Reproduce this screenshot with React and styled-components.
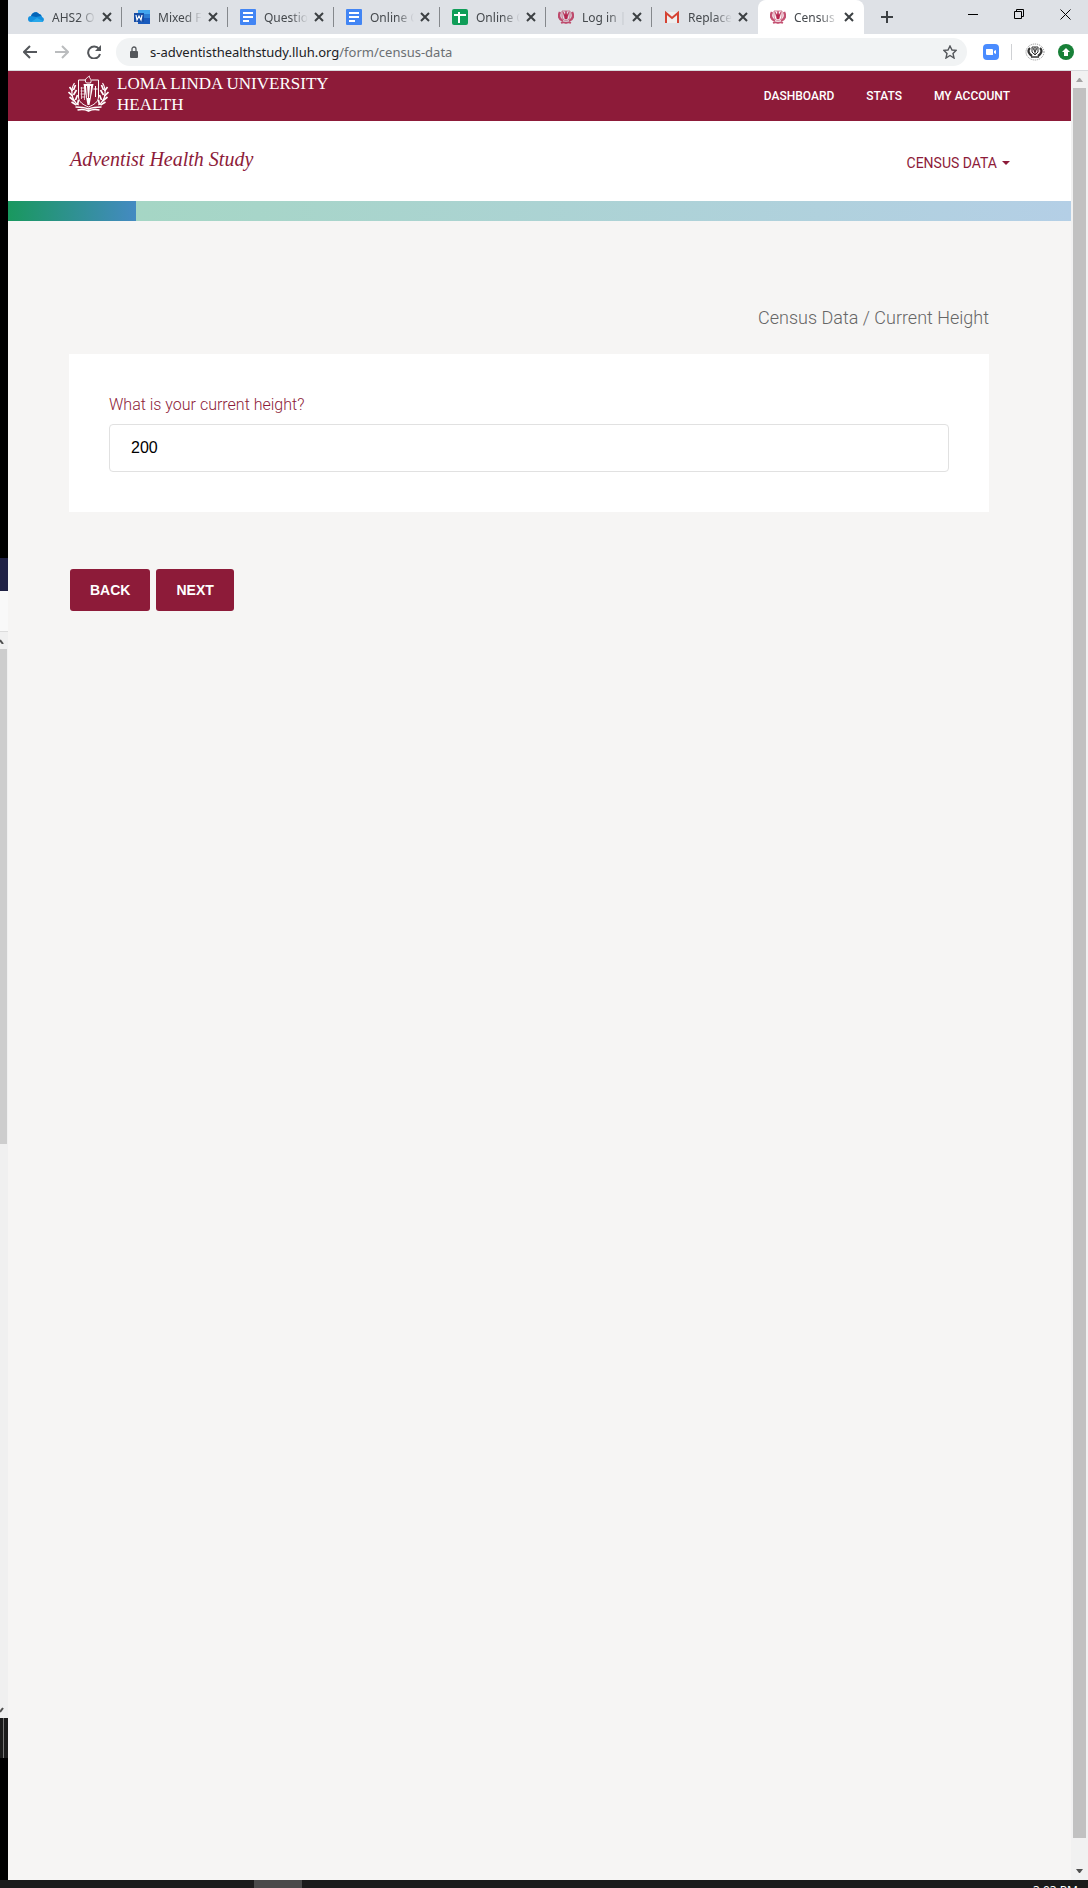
import React, { useState } from 'react';
import styled, { createGlobalStyle } from 'styled-components';

const GlobalStyle = createGlobalStyle`
  * {
    box-sizing: border-box;
  }

  body {
    margin: 0;
    background: #f6f5f4;
    font-family: Roboto, 'Liberation Sans', sans-serif;
  }

  button, input {
    font: inherit;
    margin: 0;
  }

  svg {
    display: block;
    flex: none;
  }
`;

const Desktop = styled.div`
  display: flex;
  flex-direction: column;
  min-height: 100vh;
`;

const Workspace = styled.div`
  display: flex;
  flex: 1;
`;

/* sliver of the windows behind the browser */
const Behind = styled.div`
  width: 8px;
  flex: none;
  display: flex;
  flex-direction: column;
  background: #000;
`;

const BehindTitle = styled.div`
  height: 33px;
  margin-top: 558px;
  background: #1f2144;
`;

const BehindPanel = styled.div`
  height: 41px;
  background: #f9f9f9;
  border-bottom: 1px solid #dcdcdc;
`;

const BehindScroll = styled.div`
  flex: 1;
  display: flex;
  flex-direction: column;
  justify-content: space-between;
  padding: 6px 0 5px;
  background: #f0f0f0;
`;

const BehindThumb = styled.div`
  width: 7px;
  height: 495px;
  margin: 5px 0 auto;
  background: #cdcdcd;
`;

const BehindTaskbar = styled.div`
  height: 40px;
  margin-bottom: 122px;
  background: linear-gradient(to right, #1b1b1b 3px, #777 3px, #777 4px, #1b1b1b 4px);
`;

const Browser = styled.div`
  flex: 1;
  min-width: 0;
  display: flex;
  flex-direction: column;
`;

const TabBar = styled.div`
  display: flex;
  align-items: flex-end;
  height: 34px;
  padding-left: 8px;
  background: #dee1e6;
  font-family: 'Noto Sans', sans-serif;
  font-size: 12px;
`;

const Tab = styled.div`
  position: relative;
  display: flex;
  align-items: center;
  width: 106px;
  height: 34px;
  padding: 0 7px 0 12px;
  color: #45494d;
  background: ${({ $active }) => ($active ? '#fff' : 'transparent')};
  border-radius: 8px 8px 0 0;

  &::after {
    content: '';
    position: absolute;
    right: 0;
    top: 7px;
    width: 1px;
    height: 20px;
    background: ${({ $divider }) => ($divider ? '#85888c' : 'transparent')};
  }
`;

const TabTitle = styled.span`
  flex: 1;
  min-width: 0;
  margin: 0 3px 0 8px;
  white-space: nowrap;
  mask-image: linear-gradient(to right, #000 60%, transparent);
`;

const IconButton = styled.button`
  display: flex;
  align-items: center;
  justify-content: center;
  flex: none;
  width: ${({ $size }) => $size || 16}px;
  height: ${({ $size }) => $size || 16}px;
  padding: 0;
  border: none;
  background: none;
  color: ${({ $color }) => $color || '#3c4043'};
  cursor: pointer;
`;

const NewTab = styled.div`
  display: flex;
  align-items: center;
  height: 34px;
  padding-left: 15px;
`;

const WindowControls = styled.div`
  display: flex;
  align-self: flex-start;
  gap: 30px;
  margin-left: auto;
  padding: 6px 15px 0 0;
`;

const Toolbar = styled.div`
  display: flex;
  align-items: center;
  height: 37px;
  padding: 0 14px 0 12px;
  background: #fff;
  border-bottom: 1px solid #d8dadd;
`;

const NavButtons = styled.div`
  display: flex;
  gap: 12px;
  margin-right: 12px;
`;

const AddressBar = styled.div`
  flex: 1;
  display: flex;
  align-items: center;
  height: 28px;
  padding: 0 9px 0 12px;
  border-radius: 14px;
  background: #f1f3f4;
`;

const Address = styled.div`
  flex: 1;
  margin-left: 10px;
  color: #6b6f73;
  font-family: 'Noto Sans', sans-serif;
  font-size: 13px;
`;

const Host = styled.span`
  color: #202124;
`;

const Extensions = styled.div`
  display: flex;
  align-items: center;
  gap: 12px;
  margin-left: 16px;
`;

const Separator = styled.div`
  width: 1px;
  height: 16px;
  background: #cfd1d4;
`;

const Viewport = styled.div`
  flex: 1;
  display: flex;
`;

const Page = styled.div`
  flex: 1;
  min-width: 0;
  background: #f6f5f4;
`;

const TopBar = styled.header`
  display: flex;
  align-items: center;
  justify-content: space-between;
  height: 50px;
  padding: 0 61px 0 60px;
  background: #8d1b39;
`;

const Brand = styled.a`
  display: flex;
  align-items: center;
  gap: 8px;
  padding-bottom: 4px;
  color: #fff;
  text-decoration: none;
`;

const BrandName = styled.span`
  font-family: 'Liberation Serif', serif;
  font-size: 17px;
  line-height: 21px;
`;

const TopNav = styled.nav`
  display: flex;
  gap: 32px;
`;

const TopLink = styled.a`
  color: #fff;
  font-size: 12px;
  font-weight: 500;
  text-decoration: none;
`;

const SubHeader = styled.div`
  display: flex;
  align-items: center;
  justify-content: space-between;
  height: 80px;
  padding: 0 61px 0 62px;
  background: #fff;
`;

const StudyName = styled.h1`
  margin: 0;
  padding-bottom: 3px;
  color: #8d1b39;
  font-family: 'Liberation Serif', serif;
  font-size: 20px;
  font-style: italic;
  font-weight: normal;
`;

const MenuButton = styled.button`
  display: flex;
  align-items: center;
  gap: 5px;
  padding: 4px 0 0;
  border: none;
  background: none;
  color: #8d1b39;
  font-size: 14px;
  cursor: pointer;
`;

const Progress = styled.div`
  height: 20px;
  background: linear-gradient(to right, #a3d7c0, #b4cfe6);
`;

const ProgressFill = styled.div`
  height: 100%;
  background: linear-gradient(to right, #19985e, #448ac2);
`;

const Content = styled.main`
  padding: 84px 82px 0 61px;
`;

const Breadcrumb = styled.div`
  margin-bottom: 23px;
  color: #666;
  font-size: 18px;
  font-weight: 300;
  line-height: 26px;
  text-align: right;
`;

const Card = styled.div`
  padding: 40px;
  background: #fff;
`;

const Label = styled.label`
  display: block;
  margin-bottom: 8px;
  color: #8d1b39;
  font-size: 16px;
  font-weight: 300;
  line-height: 22px;
`;

const TextInput = styled.input`
  display: block;
  width: 100%;
  height: 48px;
  padding: 0 21px;
  border: 1px solid #e1e1e1;
  border-radius: 4px;
  background: #fff;
  color: #000;
  font-family: 'Liberation Sans', sans-serif;
  font-size: 16px;
`;

const Actions = styled.div`
  display: flex;
  gap: 6px;
  margin: 57px 0 0 1px;
`;

const Button = styled.button`
  height: 42px;
  padding: 0 20px;
  border: none;
  border-radius: 3px;
  background: #8d1b39;
  color: #fff;
  font-family: 'Liberation Sans', sans-serif;
  font-size: 14px;
  font-weight: bold;
  cursor: pointer;
`;

const Scrollbar = styled.div`
  display: flex;
  flex-direction: column;
  align-items: center;
  width: 17px;
  padding: 7px 0;
  background: #f1f1f1;
`;

const ScrollThumb = styled.div`
  flex: 1;
  width: 13px;
  margin: 6px 0 31px;
  background: #c1c1c1;
`;

const Taskbar = styled.div`
  display: flex;
  justify-content: space-between;
  height: 8px;
  padding: 0 10px 0 254px;
  overflow: hidden;
  background: #1b1b1b;
`;

const TaskItem = styled.div`
  width: 48px;
  background: #4a4a4a;
`;

const Clock = styled.span`
  padding-top: 3px;
  color: #fff;
  font-family: 'Noto Sans', sans-serif;
  font-size: 12px;
  line-height: 16px;
`;

const Crest = ({ width, height, color }) => (
  <svg width={width} height={height} viewBox="0 0 40 38" fill="none" stroke={color}>
    <path d="M17 5H10v17c0 5 5 8 10 10 5-2 10-5 10-10V5h-7" />
    <path d="M15 9h10l-4 21h-2z" fill={color} stroke="none" />
    <path d="M18 11l1 12M22 11l-1 12" stroke="#8d1b39" />
    <path d="M18 8c-3-3 0-5 3-7-1 2 3 3 1 7z" />
    <path d="M27 11v11M25 14h4" />
    <path d="M12 13h4M12 16h4M12 19h5M13 22h4M13 12v12M16 12v13" opacity="0.7" />
    <path
      d="M6 8c-4 6-4 17 4 22M34 8c4 6 4 17-4 22"
      strokeWidth="1.2"
    />
    <path
      d="M1 12l3 4M0 17l4 4M1 22l5 4M3 27l5 3M7 10l-2 5M8 15l-3 5M9 20l-2 5M10 25l-1 5M39 12l-3 4M40 17l-4 4M39 22l-5 4M37 27l-5 3M33 10l2 5M32 15l3 5M31 20l2 5M30 25l1 5"
      strokeWidth="1.7"
    />
    <path d="M7 32c5 0 8 0 13 2 5-2 8-2 13-2M9 35c4-1 7-1 11 1 4-2 7-2 11-1" strokeWidth="1.6" />
  </svg>
);

/* small version of the crest, readable at favicon size */
const CrestIcon = () => (
  <svg width="16" height="16" viewBox="0 0 16 16" fill="none" stroke="#b5264f">
    <path d="M4 2h8v5c0 3-2 4-4 5-2-1-4-2-4-5z" strokeWidth="1" opacity="0.6" />
    <path d="M5 3l2 3 1-4 1 4 2-3-2 7H7z" fill="#b5264f" strokeWidth="0.5" />
    <path d="M2 3c-2 4-1 7 3 9M14 3c2 4 1 7-3 9" strokeWidth="2.4" opacity="0.8" />
    <path d="M3 14c2-1 3-1 5 0 2-1 3-1 5 0" strokeWidth="1.6" opacity="0.8" />
  </svg>
);

const CloudIcon = () => (
  <svg width="16" height="16" viewBox="0 0 16 16">
    <path d="M3 13a3 3 0 0 1 0-6c1-4 6-5 8-2 2 0 3 2 3 3 3 1 2 5 0 5z" fill="#1490df" />
    <path d="M3 7c1-4 6-5 8-2 1 0 2 1 2 2l-5 1z" fill="#0364b8" />
    <path d="M3 13l6-4 6 3-1 1z" fill="#28a8ea" />
  </svg>
);

const WordIcon = () => (
  <svg width="16" height="16" viewBox="0 0 16 16">
    <path fill="#41a5ee" d="M4 1h12v4H4z" />
    <path fill="#2b7cd3" d="M4 5h12v4H4z" />
    <path fill="#185abd" d="M4 9h12v6H4z" />
    <path fill="#174ea6" d="M0 4h10v9H0z" />
    <path d="M2 6l1 5 2-4 2 4 1-5" fill="none" stroke="#fff" strokeWidth="1.2" />
  </svg>
);

const DocsIcon = () => (
  <svg width="16" height="16" viewBox="0 0 16 16">
    <rect width="16" height="16" rx="1" fill="#4285f4" />
    <path d="M3 4h10M3 8h10M3 12h6" stroke="#fff" strokeWidth="2" />
  </svg>
);

const SheetsIcon = () => (
  <svg width="16" height="16" viewBox="0 0 16 16">
    <rect width="16" height="16" rx="2" fill="#0f9d58" />
    <path d="M2 6h12M7 3v11" stroke="#fff" strokeWidth="2" />
  </svg>
);

const GmailIcon = () => (
  <svg width="16" height="16" viewBox="0 0 16 16">
    <path d="M2 3h12v11H2z" fill="#eee" />
    <path d="M2 14V4l6 5 6-5v10" fill="none" stroke="#d54334" strokeWidth="2" />
  </svg>
);

const CloseIcon = () => (
  <svg width="10" height="10" viewBox="0 0 10 10" stroke="currentColor" strokeWidth="2">
    <path d="M1 1l8 8M9 1L1 9" />
  </svg>
);

const tabs = [
  { title: 'AHS2 O', Icon: CloudIcon },
  { title: 'Mixed F', Icon: WordIcon },
  { title: 'Questio', Icon: DocsIcon },
  { title: 'Online C', Icon: DocsIcon },
  { title: 'Online C', Icon: SheetsIcon },
  { title: 'Log in |', Icon: CrestIcon },
  { title: 'Replace', Icon: GmailIcon },
  { title: 'Census', Icon: CrestIcon },
];

const BrowserTabs = () => {
  const activeTab = tabs.length - 1;

  return (
    <TabBar>
      {tabs.map(({ title, Icon }, index) => (
        <Tab key={index} $active={index === activeTab} $divider={index < activeTab - 1}>
          <Icon />
          <TabTitle>{title}</TabTitle>
          <IconButton aria-label="Close tab">
            <CloseIcon />
          </IconButton>
        </Tab>
      ))}
      <NewTab>
        <IconButton aria-label="New tab">
          <svg width="12" height="12" viewBox="0 0 12 12" stroke="currentColor" strokeWidth="2">
            <path d="M6 0v12M0 6h12" />
          </svg>
        </IconButton>
      </NewTab>
      <WindowControls>
        <IconButton aria-label="Minimize" $color="#000">
          <svg width="10" height="10" viewBox="0 0 10 10" fill="currentColor">
            <path d="M0 5h10v1H0z" />
          </svg>
        </IconButton>
        <IconButton aria-label="Restore" $color="#000">
          <svg width="10" height="10" viewBox="0 0 10 10" fill="none" stroke="currentColor">
            <path d="M.5 2.5h7v7h-7zM2.5 2.5v-2h7v7h-2" />
          </svg>
        </IconButton>
        <IconButton aria-label="Close" $color="#000">
          <svg width="11" height="11" viewBox="0 0 11 11" stroke="currentColor">
            <path d="M.5.5l10 10M10.5.5l-10 10" />
          </svg>
        </IconButton>
      </WindowControls>
    </TabBar>
  );
};

const BrowserToolbar = () => (
  <Toolbar>
    <NavButtons>
      <IconButton aria-label="Back" $size={20} $color="#54575b">
        <svg width="14" height="14" viewBox="0 0 14 14" fill="none" stroke="currentColor" strokeWidth="2">
          <path d="M14 7H1M7 1L1 7l6 6" />
        </svg>
      </IconButton>
      <IconButton aria-label="Forward" $size={20} $color="#babcbe">
        <svg width="14" height="14" viewBox="0 0 14 14" fill="none" stroke="currentColor" strokeWidth="2">
          <path d="M0 7h13M7 1l6 6-6 6" />
        </svg>
      </IconButton>
      <IconButton aria-label="Reload" $size={20} $color="#54575b">
        <svg width="14" height="14" viewBox="0 0 14 14" fill="none" stroke="currentColor" strokeWidth="2">
          <path d="M12 4a6 6 0 1 0 1 5" />
          <path d="M14 0v6H8z" fill="currentColor" stroke="none" />
        </svg>
      </IconButton>
    </NavButtons>
    <AddressBar>
      <svg width="12" height="12" viewBox="0 0 12 12">
        <rect x="2" y="5" width="8" height="7" rx="1" fill="#54575b" />
        <path d="M4 5V3a2 2 0 0 1 4 0v2" fill="none" stroke="#54575b" strokeWidth="1.3" />
      </svg>
      <Address>
        <Host>s-adventisthealthstudy.lluh.org</Host>/form/census-data
      </Address>
      <IconButton aria-label="Bookmark this page" $color="#54575b">
        <svg width="14" height="14" viewBox="0 0 14 14" fill="none" stroke="currentColor" strokeWidth="1.4">
          <path d="M7 1l2 4 4 .4-3 3 1 4.600-4-2.500L3 13l1-4.600-3-3L5 5z" />
        </svg>
      </IconButton>
    </AddressBar>
    <Extensions>
      <IconButton aria-label="Zoom">
        <svg width="16" height="16" viewBox="0 0 16 16">
          <rect width="16" height="16" rx="4" fill="#4a8cff" />
          <path d="M3 6c0-1 0-1 1-1h5c1 0 1 1 1 1v4c0 1 0 1-1 1H4c-1 0-1-1-1-1zM11 7l2-1v4l-2-1z" fill="#fff" />
        </svg>
      </IconButton>
      <Separator />
      <IconButton aria-label="Profile" $size={22}>
        <svg width="20" height="20" viewBox="0 0 20 20" fill="none" stroke="#333">
          <ellipse cx="10" cy="10" rx="9" ry="8" stroke="#888" strokeDasharray="1 1" />
          <path d="M5 6c-3 3-1 6 2 8M15 6c3 3 1 6-2 8" strokeWidth="2.2" />
          <path d="M7 5h6v5l-3 3-3-3zM10 5v8M8 6l2 4 2-4" />
          <path d="M6 15h8" strokeWidth="1.5" />
        </svg>
      </IconButton>
      <IconButton aria-label="Update">
        <svg width="16" height="16" viewBox="0 0 16 16">
          <circle cx="8" cy="8" r="8" fill="#188038" />
          <path d="M8 4l4 4h-2v4H6V8H4z" fill="#fff" />
        </svg>
      </IconButton>
    </Extensions>
  </Toolbar>
);

const App = () => {
  const [height, setHeight] = useState('200');
  const progress = 12;

  return (
    <Desktop>
      <GlobalStyle />
      <Workspace>
        <Behind>
          <BehindTitle />
          <BehindPanel />
          <BehindScroll>
            <svg width="4" height="6" viewBox="0 0 4 6">
              <path d="M0 2l3 4" stroke="#505050" strokeWidth="2" />
            </svg>
            <BehindThumb />
            <svg width="4" height="6" viewBox="0 0 4 6">
              <path d="M0 5l3-4" stroke="#505050" strokeWidth="2" />
            </svg>
          </BehindScroll>
          <BehindTaskbar />
        </Behind>
        <Browser>
          <BrowserTabs />
          <BrowserToolbar />
          <Viewport>
            <Page>
              <TopBar>
                <Brand href="#">
                  <Crest width={41} height={38} color="#fff" />
                  <BrandName>
                    LOMA LINDA UNIVERSITY
                    <br />
                    HEALTH
                  </BrandName>
                </Brand>
                <TopNav>
                  <TopLink href="#">DASHBOARD</TopLink>
                  <TopLink href="#">STATS</TopLink>
                  <TopLink href="#">MY ACCOUNT</TopLink>
                </TopNav>
              </TopBar>
              <SubHeader>
                <StudyName>Adventist Health Study</StudyName>
                <MenuButton>
                  CENSUS DATA
                  <svg width="8" height="4" viewBox="0 0 8 4" fill="currentColor">
                    <path d="M0 0h8L4 4z" />
                  </svg>
                </MenuButton>
              </SubHeader>
              <Progress>
                <ProgressFill style={{ width: `${progress}%` }} />
              </Progress>
              <Content>
                <Breadcrumb>Census Data / Current Height</Breadcrumb>
                <Card>
                  <Label htmlFor="height">What is your current height?</Label>
                  <TextInput
                    id="height"
                    type="text"
                    value={height}
                    onChange={(event) => setHeight(event.target.value)}
                  />
                </Card>
                <Actions>
                  <Button type="button">BACK</Button>
                  <Button type="button">NEXT</Button>
                </Actions>
              </Content>
            </Page>
            <Scrollbar>
              <svg width="7" height="4" viewBox="0 0 7 4" fill="#a3a3a3">
                <path d="M0 4h7L4 0H3z" />
              </svg>
              <ScrollThumb />
              <svg width="7" height="4" viewBox="0 0 7 4" fill="#505050">
                <path d="M0 0h7L4 4H3z" />
              </svg>
            </Scrollbar>
          </Viewport>
        </Browser>
      </Workspace>
      <Taskbar>
        <TaskItem />
        <Clock>3:03 PM</Clock>
      </Taskbar>
    </Desktop>
  );
};

export default App;
